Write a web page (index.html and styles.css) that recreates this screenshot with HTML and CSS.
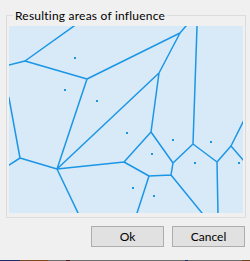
FILE: index.html
```html
<!DOCTYPE html>
<html>
<head>
<meta charset="utf-8">
<link rel="stylesheet" href="styles.css">
</head>
<body>
<div class="dialog">
  <fieldset class="group">
    <legend class="group-title">Resulting areas of influence</legend>
    <svg class="canvas" width="234" height="187" viewBox="9 26 234 187">
      <rect x="9" y="26" width="234" height="187" fill="#d8eaf7"/>
      <path class="edges" d="M8 65.25 L25 61 L75.4 25
        M25 61 L87 79 L180 33 L186.8 25
        M180 33 L159 73 L57 169
        M159 73 L151 132
        M197.05 25 L193 144
        M87 79 L57 169
        M8.8 97 L20 158 L8 165.7
        M20 158 L57 169 L124 162 L151 132 L173 163 L193 144 L217 162 L231 146 L243.6 120.8
        M57 169 L78.5 214
        M124 162 L149 176 L171 175 L173 163
        M149 176 L136.7 214
        M171 175 L202.8 214
        M217 162 L218 214
        M231 146 L244 161"/>
      <g class="sites">
        <rect x="74" y="57" width="2" height="2"/>
        <rect x="64" y="89" width="2" height="2"/>
        <rect x="96" y="100" width="2" height="2"/>
        <rect x="126" y="132" width="2" height="2"/>
        <rect x="172" y="139" width="2" height="2"/>
        <rect x="210" y="141" width="2" height="2"/>
        <rect x="151" y="153" width="2" height="2"/>
        <rect x="194" y="162" width="2" height="2"/>
        <rect x="238" y="162" width="2" height="2"/>
        <rect x="132" y="187" width="2" height="2"/>
        <rect x="153" y="195" width="2" height="2"/>
      </g>
    </svg>
  </fieldset>
  <div class="buttons">
    <button class="btn">Ok</button>
    <button class="btn">Cancel</button>
  </div>
  <div class="taskbar">
    <span class="seg s1"></span><span class="seg s2"></span><span class="seg s3"></span><span class="seg s4"></span><span class="seg s5"></span><span class="seg s6"></span><span class="seg s7"></span><span class="seg s8"></span>
  </div>
</div>
</body>
</html>
```

FILE: styles.css
```css
html, body {
  margin: 0;
  padding: 0;
  background: #f0f0f0;
}

.dialog {
  width: 250px;
  height: 261px;
  display: flex;
  flex-direction: column;
  font-family: Lato, "Liberation Sans", sans-serif;
  font-size: 12px;
  color: #000;
}

.group {
  margin: 7px 0 0 6px;
  padding: 2px 2px 4px 2px;
  width: 234px;
  border: 1px solid #dcdcdc;
  min-width: 0;
}

.group-title {
  margin-left: 4px;
  padding: 0 2px;
  line-height: 17px;
  height: 17px;
  letter-spacing: 0.22px;
}

.canvas {
  display: block;
}

.edges {
  fill: none;
  stroke: #1b96e6;
  stroke-width: 1.5;
  stroke-linejoin: round;
}

.sites rect {
  fill: #1b96e6;
}

.buttons {
  display: flex;
  justify-content: flex-end;
  gap: 8px;
  margin: 8px 5px 0 0;
}

.btn {
  width: 73px;
  height: 21px;
  padding: 0;
  background: #e1e1e1;
  border: 1px solid #adadad;
  font-family: Lato, "Liberation Sans", sans-serif;
  font-size: 12px;
  color: #000;
}

.taskbar {
  margin-top: auto;
  display: flex;
  height: 1px;
}

.seg { display: block; height: 1px; }
.s1 { width: 20px; background: #1c2c64; }
.s2 { width: 28px; background: #7a4a1e; }
.s3 { width: 18px; background: #6e6e6e; }
.s4 { width: 4px; background: #4e1c1c; }
.s5 { width: 115px; background: #6e6e6e; }
.s6 { width: 3px; background: #1c2c6a; }
.s7 { width: 54px; background: #6e6e6e; }
.s8 { width: 8px; background: #6e4420; }
```
